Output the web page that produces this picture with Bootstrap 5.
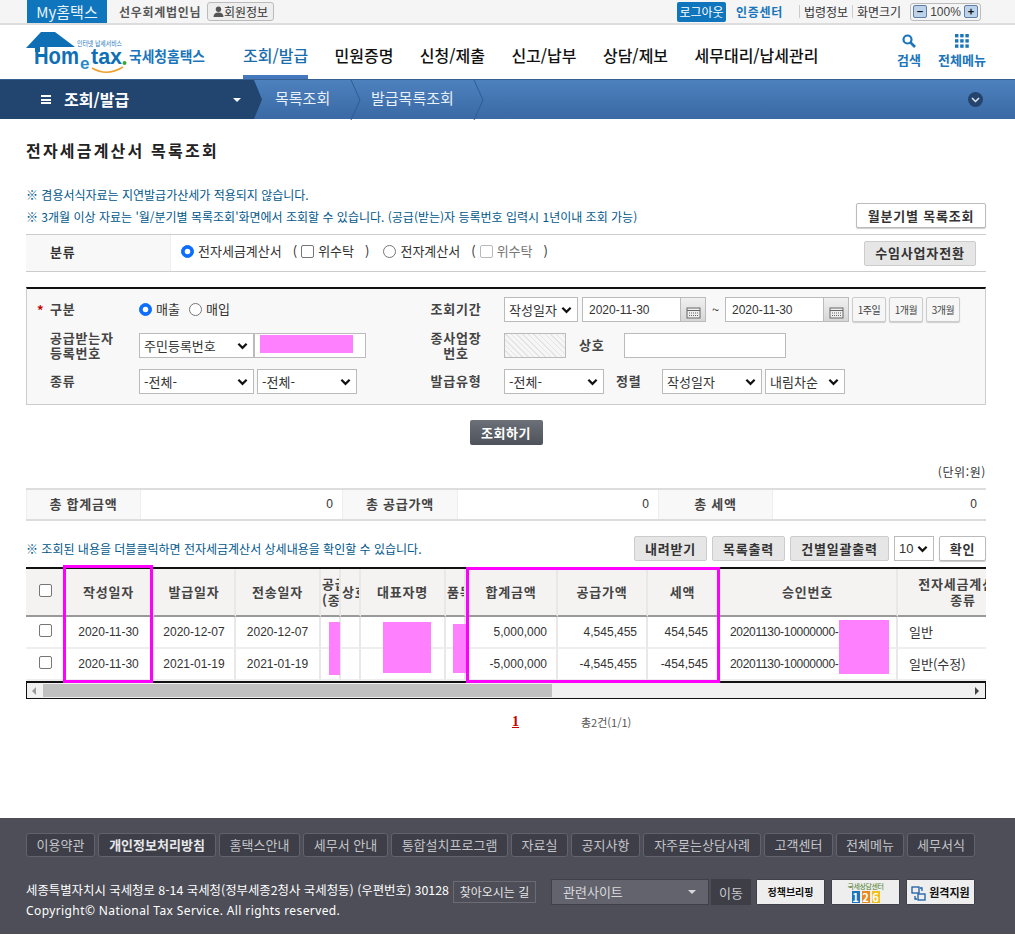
<!DOCTYPE html>
<html lang="ko">
<head>
  <meta charset="UTF-8">
  <title>전자세금계산서 목록조회 - 국세청홈택스</title>
  <meta name="viewport" content="width=device-width, initial-scale=1.0">
  <link href="https://cdn.jsdelivr.net/npm/bootstrap@5.3.0/dist/css/bootstrap.min.css" rel="stylesheet">
  <style>
    body { font-family: "Noto Sans CJK KR", "Liberation Sans", sans-serif; font-size: 13px; line-height: 16px; color: #333; background: #fff; min-height: 947px; }
    .num { font-family: "Liberation Sans", "Noto Sans CJK KR", sans-serif; font-size: 12px; }

    /* 상단 */
    .topbar { height: 25px; background: #f5f5f5; border-bottom: 2px solid #ddd; }
    .my-tab { margin-left: 27px; width: 80px; height: 23px; background: #0f75bc; color: #e8f3fb; font-size: 15px; line-height: 23px; text-align: center; }
    .user-name { margin-left: 12px; width: 88px; color: #555; font-weight: 700; font-size: 12px; letter-spacing: .7px; white-space: nowrap; }
    .btn-member { width: 67px; height: 19px; padding: 0; border: 1px solid #bbb; border-radius: 3px; background: #eee; color: #333; font-size: 12px; line-height: 16px; }
    .btn-logout { margin-left: 403px; width: 49px; height: 20px; padding: 0; border: 0; border-radius: 2px; background: #0f75bc; color: #fff; font-size: 12px; line-height: 20px; }
    .cert-link { margin-left: 10px; width: 48px; color: #1a75bb; font-weight: 700; font-size: 12px; letter-spacing: .7px; white-space: nowrap; }
    .top-text { font-size: 12px; color: #333; white-space: nowrap; line-height: 13px; }
    .law-link { margin-left: 15px; width: 53px; padding-left: 4px; }
    .size-label { width: 54px; padding-left: 4px; }
    .sep-left { border-left: 1px solid #ccc; }
    .zoom-box { margin-left: 4px; width: 71px; height: 18px; border: 1px solid #bbb; border-radius: 3px; background: #f5f5f5; padding: 0 2px; color: #444; }
    .zoom-btn { width: 14px; height: 13px; border: 1px solid #5f7fa6; border-radius: 2px; background: #bcd3ea; color: #111; font-size: 11px; line-height: 10px; text-align: center; font-weight: 700; }

    /* 헤더 */
    .head-row { height: 54px; background: #fff; }
    .logo-box { margin-left: 26px; width: 180px; height: 54px; }
    .logo-name { font-family: "Noto Sans CJK KR", sans-serif; }
    .main-nav { margin-left: 37px; gap: 26.4px; flex-wrap: nowrap; }
    .main-nav .nav-link { padding: 19px 0 0; height: 54px; font-size: 16px; line-height: 22px; font-weight: 500; color: #111; white-space: nowrap; }
    .main-nav .nav-link.active { color: #1a6eae; border-bottom: 4px solid #4477bb; }
    .head-tools { margin-left: auto; margin-right: 29px; }
    .tool-item { color: #1a75bb; font-size: 13px; font-weight: 700; line-height: 16px; text-align: center; padding-top: 9px; white-space: nowrap; }
    .tool-item svg { display: block; margin: 0 auto 4px; }
    .tool-search { width: 24px; }
    .tool-all { width: 48px; margin-left: 17px; }

    /* 파란 메뉴 바 */
    .crumb-bar { height: 40px; background: linear-gradient(#4c81bd, #3a69a5); color: #fff; border-top: 1px solid #36608f; }
    .crumb-root { width: 262px; height: 100%; padding-left: 41px; background: #21456f; clip-path: polygon(0 0, 254px 0, 262px 50%, 254px 100%, 0 100%); font-size: 16px; font-weight: 700; }
    .menu-lines { width: 10px; height: 9px; border-top: 2px solid #fff; border-bottom: 2px solid #fff; position: relative; margin-right: 13px; }
    .menu-lines::after { content: ""; position: absolute; left: 0; right: 0; top: 1.5px; height: 2px; background: #fff; }
    .root-label { width: 169px; margin-bottom: 2px; }
    .caret-white { width: 0; height: 0; border-left: 4px solid transparent; border-right: 4px solid transparent; border-top: 4px solid #fff; }
    .crumb-item { height: 100%; color: #e8f0f8; font-size: 15px; white-space: nowrap; }
    .crumb-one { margin-left: 13px; width: 86px; }
    .crumb-two { margin-left: 10px; width: 113px; }
    .crumb-item svg { margin-left: auto; flex: none; }
    .crumb-text { margin-bottom: 4px; }
    .bar-toggle { margin-left: auto; margin-right: 32px; width: 15px; height: 15px; border-radius: 50%; background: #24446e; }

    /* 본문 */
    .page-main { padding: 0 29px 0 26px; }
    .page-title { margin: 21px 0 0; height: 20px; font-size: 16px; line-height: 20px; font-weight: 700; letter-spacing: 2.2px; color: #222; }
    .notes-row { margin-top: 25px; height: 49px; }
    .note-line { height: 20px; line-height: 20px; font-size: 12px; color: #00578a; white-space: nowrap; }
    .note-gap { margin-top: 2px; }
    .btn-white { height: 25px; padding: 0; border: 1px solid #bbb; border-radius: 2px; background: #fff; box-shadow: 0 1px 1px #ccc; color: #333; font-size: 13px; font-weight: 700; letter-spacing: .8px; line-height: 22px; white-space: nowrap; }
    .btn-light-grey { height: 25px; padding: 0; border: 1px solid #ccc; border-radius: 2px; background: #e6e6e6; color: #333; font-size: 13px; font-weight: 700; letter-spacing: .8px; line-height: 22px; white-space: nowrap; }
    .btn-period { width: 130px; margin-bottom: 6px; }

    .kind-row { height: 38px; border-top: 1px solid #ccc; border-bottom: 1px solid #ccc; }
    .kind-label { width: 145px; padding-left: 24px; height: 100%; line-height: 34px; background: #f8f8f8; border-right: 1px solid #eee; font-weight: 700; letter-spacing: .8px; }
    .kind-opts { padding-left: 10px; white-space: nowrap; margin-bottom: 4px; }
    .paren-a { margin: 0 4px 0 11px; }
    .paren-b { margin: 0 14px 0 11px; }
    .ml-4 { margin-left: 4px; }
    .txt-muted { color: #777; }
    .btn-agent { width: 112px; margin-left: auto; margin-right: 10px; }

    .form-check-input { width: 13px; height: 13px; border-color: #767676; flex: none; margin: 0; }
    .form-check-input[type=checkbox] { border-radius: 2px; }

    .search-box { margin-top: 15px; height: 118px; padding-top: 8px; background: #f8f8f8; border: 1px solid #ccc; border-top: 2px solid #111; }
    .s-row { height: 25px; margin-bottom: 11px; }
    .star { width: 23px; padding-left: 10px; color: #c00; font-weight: 700; }
    .s-label { width: 89px; margin-bottom: 2px; font-weight: 700; letter-spacing: .8px; color: #444; white-space: nowrap; }
    .s-label-row { margin-left: 23px; margin-bottom: 2px; width: 89px; font-weight: 700; letter-spacing: .8px; color: #444; line-height: 15px; white-space: nowrap; }
    .lbl-center { width: 52px; margin-right: 22px; text-align: center; line-height: 15px; }
    .radio-sp { margin-left: 4px; margin-right: 9px; margin-bottom: 2px; white-space: nowrap; }
    .r1-left { width: 291px; }
    .gap-to-b { margin-left: 64px; }
    .gap-to-c { margin-left: 73px; }

    .form-select, .form-control { height: 25px; padding: 0 4px; border: 1px solid #bbb; border-radius: 0; font-size: 13px; line-height: 23px; color: #333; box-shadow: none; min-height: 0; }
    .form-select { padding-right: 18px; background-image: url("data:image/svg+xml,%3csvg xmlns='http://www.w3.org/2000/svg' viewBox='0 0 12 8'%3e%3cpath fill='none' stroke='%23111' stroke-width='2.4' d='M1.5 1.5 6 6l4.5-4.5'/%3e%3c/svg%3e"); background-position: right 5px center; background-size: 11px 8px; }
    .form-control.num { font-size: 12px; }
    .w-74 { width: 74px; }
    .w-100x { width: 100px; }
    .w-115 { width: 115px; }
    .w-112 { width: 112px; }
    .w-62 { width: 62px; }
    .w-80 { width: 80px; }
    .w-162 { width: 162px; }
    .ms-3px { margin-left: 3px; }
    .ms-4px { margin-left: 4px; }
    .date-in { width: 99px; padding-left: 6px; }
    .cal-btn { width: 25px; height: 25px; padding: 0; border: 1px solid #bbb; border-left: 0; border-radius: 0; background: linear-gradient(#f0f0f0, #d6d6d6); }
    .tilde { width: 19px; text-align: center; }
    .quick { width: 34px; height: 25px; margin-left: 3px; padding: 0; border: 1px solid #ccc; border-radius: 2px; background: #f6f6f6; box-shadow: 0 1px 1px #ccc; font-size: 10px; line-height: 12px; color: #444; white-space: nowrap; letter-spacing: -.5px; }
    .hatched { background: repeating-linear-gradient(45deg, #e4e4e4, #e4e4e4 1px, #f6f6f6 1px, #f6f6f6 4px); }
    .sangho { width: 58px; padding-left: 13px; margin-bottom: 2px; font-weight: 700; letter-spacing: .8px; color: #444; }
    .jeong { width: 58px; padding-left: 12px; margin-bottom: 2px; font-weight: 700; letter-spacing: .8px; color: #444; }

    .go-row { margin-top: 15px; }
    .btn-go { width: 73px; height: 25px; padding: 0; border: 0; border-radius: 2px; background: linear-gradient(#6b7079, #4e525a); color: #fff; font-size: 13px; font-weight: 700; letter-spacing: .5px; line-height: 22px; }
    .unit-row { margin-top: 20px; height: 14px; line-height: 14px; font-size: 12px; letter-spacing: .6px; text-align: right; }

    .sum-row { margin-top: 9px; height: 33px; border-top: 2px solid #ddd; border-bottom: 2px solid #ddd; }
    .sum-th { height: 100%; text-align: center; line-height: 27px; background: #f8f8f8; font-weight: 700; letter-spacing: .8px; border-left: 1px solid #eee; border-right: 1px solid #eee; color: #444; }
    .sum-td { height: 100%; text-align: right; line-height: 29px; padding-right: 9px; }
    .w-115h { width: 115px; }
    .w-116h { width: 116px; }
    .w-201 { width: 201px; }
    .w-200 { width: 200px; }
    .w-213 { width: 213px; }

    .list-tools { margin-top: 15px; height: 25px; }
    .list-note { line-height: 25px; font-size: 12px; color: #00578a; white-space: nowrap; }
    .tools-right { margin-left: auto; gap: 5px; }
    .btn-dn { width: 73px; }
    .btn-pr { width: 73px; }
    .btn-all { width: 99px; }
    .sel-count { width: 40px; }
    .btn-ok { width: 47px; }

    .grid-wrap { margin-top: 6px; position: relative; height: 132px; }
    .grid-scroll { height: 114px; overflow: hidden; border-top: 2px solid #111; }
    .grid-table { width: 1004px; max-width: none; table-layout: fixed; margin: 0; border-collapse: separate; border-spacing: 0; }
    .grid-table th { height: 48px; padding: 0 1px; background: #f4f3f2; border: 0; border-right: 2px solid #e8e8e8; border-bottom: 2px solid #999; font-weight: 700; letter-spacing: .8px; color: #444; text-align: center; vertical-align: middle; line-height: 16px; overflow: hidden; white-space: nowrap; box-shadow: none; }
    .grid-table td { height: 32px; padding: 0; border: 0; border-right: 2px solid #e8e8e8; border-bottom: 2px solid #eee; text-align: center; vertical-align: middle; color: #333; white-space: nowrap; overflow: hidden; box-shadow: none; }
    .grid-table .check-cell { padding-right: 1px; border-right: 0; }
    .grid-table .amount { text-align: right; padding-right: 9px; }
    .grid-table .lefty { text-align: left; padding-left: 11px; }
    .grid-table .appr { text-align: left; padding-left: 11px; letter-spacing: -.3px; }
    .c-39 { width: 39px; } .c-89 { width: 89px; } .c-82 { width: 82px; } .c-85 { width: 85px; } .c-20 { width: 20px; }
    .c-92 { width: 92px; } .c-90 { width: 90px; } .c-71 { width: 71px; } .c-179 { width: 179px; } .c-132 { width: 132px; }

    .h-scroll { height: 18px; background: #f0f0f0; border: 1px solid #111; border-top: 2px solid #111; padding: 1px 0; }
    .h-arrow { width: 16px; padding-left: 5px; }
    .h-thumb { width: 509px; background: #c0c0c0; }
    .arrow-l { width: 0; height: 0; border-top: 4px solid transparent; border-bottom: 4px solid transparent; border-right: 4px solid #999; }
    .arrow-r { width: 0; height: 0; margin-left: auto; margin-right: 6px; align-self: center; border-top: 4px solid transparent; border-bottom: 4px solid transparent; border-left: 4px solid #444; }

    /* 가림 표시 */
    .pink { position: absolute; background: #ff80ff; }
    .pink-a { left: 303px; top: 55px; width: 11px; height: 53px; }
    .pink-b { left: 357px; top: 55px; width: 48px; height: 51px; }
    .pink-c { left: 427px; top: 57px; width: 13px; height: 49px; }
    .pink-d { left: 813px; top: 53px; width: 50px; height: 54px; }
    .mark-box { position: absolute; border: 3px solid #f0f; }
    .mark-a { left: 37px; top: -2px; width: 90px; height: 118px; }
    .mark-b { left: 440px; top: 0; width: 254px; height: 116px; }
    .reg-field { position: relative; }
    .reg-pink { left: 6px; top: 2px; width: 93px; height: 18px; }

    .pager-row { margin-top: 15px; height: 16px; }
    .pager-one { margin-left: 486px; width: 69px; font-family: "Liberation Serif", serif; font-size: 14px; font-weight: 700; color: #c00; text-decoration: underline; }
    .pager-total { font-size: 11px; color: #555; }

    /* 푸터 */
    .page-foot { margin-top: 88px; height: 116px; background: #4d4e57; padding: 15px 0 0 26px; color: #fff; }
    .foot-links { gap: 3px; }
    .foot-btn { height: 24px; padding: 0; border: 1px solid #61626b; border-radius: 3px; background: #3d3e47; color: #c4c5c9; font-size: 13px; line-height: 20px; white-space: nowrap; }
    .foot-btn.strong-link { color: #e6e7ea; font-weight: 700; }
    .fb-69 { width: 69px; } .fb-118 { width: 118px; } .fb-81 { width: 81px; } .fb-85 { width: 85px; } .fb-117 { width: 117px; } .fb-57 { width: 57px; } .fb-68 { width: 68px; }
    .foot-bottom { margin-top: 22px; }
    .addr-col { width: 525px; }
    .addr-line { height: 22px; line-height: 22px; font-size: 12.4px; white-space: nowrap; }
    .addr-btn { width: 83px; height: 22px; margin-left: 4px; padding: 0; border: 1px solid #6a6b73; border-radius: 0; background: transparent; color: #e6e6e6; font-size: 12px; line-height: 19px; white-space: nowrap; }
    .copy-line { height: 20px; line-height: 20px; font-size: 12px; font-family: "Noto Sans", sans-serif; letter-spacing: .4px; white-space: nowrap; }
    .site-sel { width: 158px; height: 26px; padding: 0 12px 0 11px; border: 1px solid #3f4048; background: #62636d; color: #d8d8dc; font-size: 13px; }
    .caret-soft { margin-left: auto; width: 0; height: 0; border-left: 4px solid transparent; border-right: 4px solid transparent; border-top: 4px solid #d8d8dc; }
    .btn-move { width: 40px; height: 26px; margin-left: 2px; padding: 0; border: 0; border-radius: 0; background: #3d3e46; color: #c8c8cc; font-size: 13px; line-height: 23px; }
    .ext-btn { width: 69px; height: 26px; margin-left: 6px; padding: 0; border: 1px solid #3f4048; border-radius: 1px; background: #eee; color: #111; font-size: 10px; font-weight: 700; line-height: 24px; white-space: nowrap; }
    .ext-first { margin-left: 5px; }
    .ext-small { display: block; height: 10px; line-height: 10px; font-size: 7px; font-weight: 400; color: #4a7a2a; letter-spacing: -.4px; }
    .n-row { display: flex; justify-content: center; height: 12px; line-height: 12px; font-size: 11px; font-weight: 700; color: #fff; }
    .n-a { background: #1a75bb; width: 8px; }
    .n-b { background: #e98a20; width: 8px; margin-left: 2px; }
    .n-c { background: #f0c020; width: 8px; margin-left: 2px; }
    .ext-remote { font-size: 11px; }
    .ext-remote svg { margin-right: 3px; vertical-align: -4px; }
  </style>
</head>
<body>
  <div class="topbar d-flex align-items-center">
    <div class="my-tab">My홈택스</div>
    <div class="user-name">선우회계법인님</div>
    <button class="btn btn-member d-flex align-items-center justify-content-center">
      <svg width="11" height="11" viewBox="0 0 11 11"><circle cx="5.5" cy="3.2" r="2.7" fill="#555"/><path d="M0.5 11c0-3 2-4.4 5-4.4s5 1.4 5 4.4z" fill="#555"/></svg>회원정보
    </button>
    <button class="btn btn-logout">로그아웃</button>
    <div class="cert-link">인증센터</div>
    <div class="top-text law-link sep-left">법령정보</div>
    <div class="top-text size-label sep-left">화면크기</div>
    <div class="zoom-box d-flex align-items-center justify-content-between">
      <span class="zoom-btn">−</span><span class="num">100%</span><span class="zoom-btn">+</span>
    </div>
  </div>

  <div class="head-row d-flex">
    <div class="logo-box">
      <svg width="180" height="54" viewBox="26 25 180 54" aria-label="Hometax 국세청홈택스">
        <path d="M26 48 L41 32 H55 L75 47 H40 V52 H35 V48z" fill="#0f6fb5"/>
        <text x="77" y="45.5" font-size="6.5" fill="#1a75bb" textLength="45" lengthAdjust="spacingAndGlyphs" font-family="Noto Sans CJK KR">인터넷 납세서비스</text>
        <text x="34" y="64" font-size="23" font-weight="700" fill="#0f6fb5" textLength="45" lengthAdjust="spacingAndGlyphs" font-family="Liberation Sans">Hom</text>
        <text x="80" y="69" font-size="17" font-weight="700" fill="#2a8ac8" font-family="Liberation Sans">e</text>
        <text x="91" y="64" font-size="22" font-weight="700" fill="#0f6fb5" textLength="31" lengthAdjust="spacingAndGlyphs" font-family="Liberation Sans">tax</text>
        <circle cx="124.5" cy="63" r="2" fill="#3aa63a"/>
        <path d="M92 68 Q107 77 123 67" fill="none" stroke="#f0a030" stroke-width="1.5"/>
        <text x="129" y="62" font-size="14.5" font-weight="700" fill="#1a75bb" textLength="76" lengthAdjust="spacingAndGlyphs" class="logo-name">국세청홈택스</text>
      </svg>
    </div>
    <nav class="nav main-nav">
      <a class="nav-link active" href="#">조회/발급</a>
      <a class="nav-link" href="#">민원증명</a>
      <a class="nav-link" href="#">신청/제출</a>
      <a class="nav-link" href="#">신고/납부</a>
      <a class="nav-link" href="#">상담/제보</a>
      <a class="nav-link" href="#">세무대리/납세관리</a>
    </nav>
    <div class="head-tools d-flex">
      <div class="tool-item tool-search">
        <svg width="14" height="14" viewBox="0 0 14 14"><circle cx="5.5" cy="5.5" r="4" fill="none" stroke="#1a75bb" stroke-width="2.2"/><path d="M8.5 8.5 L13 13" stroke="#1a75bb" stroke-width="2.6"/></svg>
        검색
      </div>
      <div class="tool-item tool-all">
        <svg width="14" height="14" viewBox="0 0 14 14" fill="#1a75bb"><rect width="3.4" height="3.4"/><rect x="5.2" width="3.4" height="3.4"/><rect x="10.4" width="3.4" height="3.4"/><rect y="5.2" width="3.4" height="3.4"/><rect x="5.2" y="5.2" width="3.4" height="3.4"/><rect x="10.4" y="5.2" width="3.4" height="3.4"/><rect y="10.4" width="3.4" height="3.4"/><rect x="5.2" y="10.4" width="3.4" height="3.4"/><rect x="10.4" y="10.4" width="3.4" height="3.4"/></svg>
        전체메뉴
      </div>
    </div>
  </div>

  <div class="crumb-bar d-flex align-items-center">
    <div class="crumb-root d-flex align-items-center">
      <span class="menu-lines"></span>
      <span class="root-label">조회/발급</span>
      <span class="caret-white"></span>
    </div>
    <div class="crumb-item crumb-one d-flex align-items-center"><span class="crumb-text">목록조회</span>
      <svg width="11" height="40" viewBox="0 0 11 40"><path d="M1 0 L10 20 L1 40" fill="none" stroke="#2f5c92" stroke-width="1"/></svg>
    </div>
    <div class="crumb-item crumb-two d-flex align-items-center"><span class="crumb-text">발급목록조회</span>
      <svg width="11" height="40" viewBox="0 0 11 40"><path d="M1 0 L10 20 L1 40" fill="none" stroke="#2f5c92" stroke-width="1"/></svg>
    </div>
    <div class="bar-toggle d-flex align-items-center justify-content-center">
      <svg width="9" height="6" viewBox="0 0 9 6"><path d="M1 1 L4.5 4.5 L8 1" fill="none" stroke="#dfe7f0" stroke-width="1.5"/></svg>
    </div>
  </div>

  <main class="page-main">
    <h1 class="page-title">전자세금계산서 목록조회</h1>

    <div class="notes-row d-flex justify-content-between">
      <div>
        <div class="note-line">※ 겸용서식자료는 지연발급가산세가 적용되지 않습니다.</div>
        <div class="note-line note-gap">※ 3개월 이상 자료는 '월/분기별 목록조회'화면에서 조회할 수 있습니다. (공급(받는)자 등록번호 입력시 1년이내 조회 가능)</div>
      </div>
      <button class="btn btn-white btn-period align-self-end">월분기별 목록조회</button>
    </div>

    <div class="kind-row d-flex align-items-center">
      <div class="kind-label">분류</div>
      <div class="kind-opts d-flex align-items-center">
        <input class="form-check-input" type="radio" name="kind" checked>
        <span class="ml-4">전자세금계산서</span>
        <span class="paren-a">(</span>
        <input class="form-check-input" type="checkbox">
        <span class="ml-4">위수탁</span>
        <span class="paren-b">)</span>
        <input class="form-check-input" type="radio" name="kind">
        <span class="ml-4">전자계산서</span>
        <span class="paren-a">(</span>
        <input class="form-check-input" type="checkbox" disabled>
        <span class="ml-4 txt-muted">위수탁</span>
        <span class="paren-a">)</span>
      </div>
      <button class="btn btn-light-grey btn-agent">수임사업자전환</button>
    </div>

    <div class="search-box">
      <div class="s-row d-flex align-items-center">
        <span class="star">*</span>
        <span class="s-label">구분</span>
        <div class="r1-left d-flex align-items-center">
          <input class="form-check-input" type="radio" name="sale" checked><span class="radio-sp">매출</span>
          <input class="form-check-input" type="radio" name="sale"><span class="radio-sp">매입</span>
        </div>
        <span class="s-label lbl-center">조회기간</span>
        <select class="form-select w-74"><option>작성일자</option></select>
        <input class="form-control date-in ms-4px num" value="2020-11-30">
        <button class="btn cal-btn"><svg width="15" height="13" viewBox="0 0 15 13"><rect x="1" y="2" width="13" height="10" fill="#eee" stroke="#666"/><path d="M1 4.5H14" stroke="#666"/><path d="M3 7H12M3 9.5H12" stroke="#666" stroke-dasharray="1 1"/></svg></button>
        <span class="tilde">~</span>
        <input class="form-control date-in num" value="2020-11-30">
        <button class="btn cal-btn"><svg width="15" height="13" viewBox="0 0 15 13"><rect x="1" y="2" width="13" height="10" fill="#eee" stroke="#666"/><path d="M1 4.5H14" stroke="#666"/><path d="M3 7H12M3 9.5H12" stroke="#666" stroke-dasharray="1 1"/></svg></button>
        <button class="btn quick">1주일</button>
        <button class="btn quick">1개월</button>
        <button class="btn quick">3개월</button>
      </div>
      <div class="s-row d-flex align-items-center">
        <span class="s-label-row">공급받는자<br>등록번호</span>
        <select class="form-select w-115"><option>주민등록번호</option></select>
        <div class="reg-field"><input class="form-control w-112"><span class="pink reg-pink"></span></div>
        <span class="s-label lbl-center gap-to-b">종사업장<br>번호</span>
        <input class="form-control w-62 hatched" disabled>
        <span class="sangho">상호</span>
        <input class="form-control w-162">
      </div>
      <div class="s-row d-flex align-items-center">
        <span class="s-label-row">종류</span>
        <select class="form-select w-115"><option>-전체-</option></select>
        <select class="form-select w-100x ms-3px"><option>-전체-</option></select>
        <span class="s-label lbl-center gap-to-c">발급유형</span>
        <select class="form-select w-100x"><option>-전체-</option></select>
        <span class="jeong">정렬</span>
        <select class="form-select w-100x"><option>작성일자</option></select>
        <select class="form-select w-80 ms-3px"><option>내림차순</option></select>
      </div>
    </div>

    <div class="go-row d-flex justify-content-center">
      <button class="btn btn-go">조회하기</button>
    </div>

    <div class="unit-row">(단위:원)</div>

    <div class="sum-row d-flex">
      <div class="sum-th w-115h">총 합계금액</div>
      <div class="sum-td w-201 num">0</div>
      <div class="sum-th w-116h">총 공급가액</div>
      <div class="sum-td w-200 num">0</div>
      <div class="sum-th w-115h">총 세액</div>
      <div class="sum-td w-213 num">0</div>
    </div>

    <div class="list-tools d-flex">
      <div class="list-note">※ 조회된 내용을 더블클릭하면 전자세금계산서 상세내용을 확인할 수 있습니다.</div>
      <div class="tools-right d-flex">
        <button class="btn btn-light-grey btn-dn">내려받기</button>
        <button class="btn btn-light-grey btn-pr">목록출력</button>
        <button class="btn btn-light-grey btn-all">건별일괄출력</button>
        <select class="form-select sel-count num"><option>10</option></select>
        <button class="btn btn-white btn-ok">확인</button>
      </div>
    </div>

    <div class="grid-wrap">
      <div class="grid-scroll">
        <table class="table grid-table">
          <colgroup>
            <col class="c-39"><col class="c-89"><col class="c-82"><col class="c-85"><col class="c-20"><col class="c-20"><col class="c-85"><col class="c-20"><col class="c-92"><col class="c-90"><col class="c-71"><col class="c-179"><col class="c-132">
          </colgroup>
          <thead>
            <tr>
              <th class="check-cell"><input class="form-check-input" type="checkbox"></th>
              <th>작성일자</th>
              <th>발급일자</th>
              <th>전송일자</th>
              <th>공급받는자<br>(종사업장)</th>
              <th>상호</th>
              <th>대표자명</th>
              <th>품목명</th>
              <th>합계금액</th>
              <th>공급가액</th>
              <th>세액</th>
              <th>승인번호</th>
              <th>전자세금계산서<br>종류</th>
            </tr>
          </thead>
          <tbody>
            <tr>
              <td class="check-cell"><input class="form-check-input" type="checkbox"></td>
              <td class="num">2020-11-30</td>
              <td class="num">2020-12-07</td>
              <td class="num">2020-12-07</td>
              <td></td><td></td><td></td><td></td>
              <td class="num amount">5,000,000</td>
              <td class="num amount">4,545,455</td>
              <td class="num amount">454,545</td>
              <td class="num appr">20201130-10000000-</td>
              <td class="lefty">일반</td>
            </tr>
            <tr>
              <td class="check-cell"><input class="form-check-input" type="checkbox"></td>
              <td class="num">2020-11-30</td>
              <td class="num">2021-01-19</td>
              <td class="num">2021-01-19</td>
              <td></td><td></td><td></td><td></td>
              <td class="num amount">-5,000,000</td>
              <td class="num amount">-4,545,455</td>
              <td class="num amount">-454,545</td>
              <td class="num appr">20201130-10000000-</td>
              <td class="lefty">일반(수정)</td>
            </tr>
          </tbody>
        </table>
      </div>
      <div class="h-scroll d-flex">
        <div class="h-arrow d-flex align-items-center"><span class="arrow-l"></span></div>
        <div class="h-thumb"></div>
        <span class="arrow-r"></span>
      </div>
      <span class="pink pink-a"></span>
      <span class="pink pink-b"></span>
      <span class="pink pink-c"></span>
      <span class="pink pink-d"></span>
      <span class="mark-box mark-a"></span>
      <span class="mark-box mark-b"></span>
    </div>

    <div class="pager-row d-flex align-items-center">
      <span class="pager-one">1</span>
      <span class="pager-total">총2건(1/1)</span>
    </div>
  </main>

  <footer class="page-foot">
    <div class="foot-links d-flex">
      <button class="btn foot-btn fb-69">이용약관</button>
      <button class="btn foot-btn strong-link fb-118">개인정보처리방침</button>
      <button class="btn foot-btn fb-81">홈택스안내</button>
      <button class="btn foot-btn fb-85">세무서 안내</button>
      <button class="btn foot-btn fb-117">통합설치프로그램</button>
      <button class="btn foot-btn fb-57">자료실</button>
      <button class="btn foot-btn fb-69">공지사항</button>
      <button class="btn foot-btn fb-118">자주묻는상담사례</button>
      <button class="btn foot-btn fb-69">고객센터</button>
      <button class="btn foot-btn fb-68">전체메뉴</button>
      <button class="btn foot-btn fb-68">세무서식</button>
    </div>
    <div class="foot-bottom d-flex">
      <div class="addr-col">
        <div class="addr-line">세종특별자치시 국세청로 8-14 국세청(정부세종2청사 국세청동) (우편번호) 30128<button class="btn addr-btn">찾아오시는 길</button></div>
        <div class="copy-line">Copyright© National Tax Service. All rights reserved.</div>
      </div>
      <div class="site-sel d-flex align-items-center">관련사이트<span class="caret-soft"></span></div>
      <button class="btn btn-move">이동</button>
      <button class="btn ext-btn ext-first">정책브리핑</button>
      <button class="btn ext-btn">
        <span class="ext-small">국세상담센터</span>
        <span class="n-row"><span class="n-a">1</span><span class="n-b">2</span><span class="n-c">6</span></span>
      </button>
      <button class="btn ext-btn ext-remote"><svg width="15" height="15" viewBox="0 0 15 15" fill="none" stroke="#1a5ea8" stroke-width="1.3"><rect x="1" y="1" width="7" height="6"/><rect x="7" y="8" width="7" height="6"/><path d="M11 5V2H9M4 10v3h2"/></svg>원격지원</button>
    </div>
  </footer>
</body>
</html>
